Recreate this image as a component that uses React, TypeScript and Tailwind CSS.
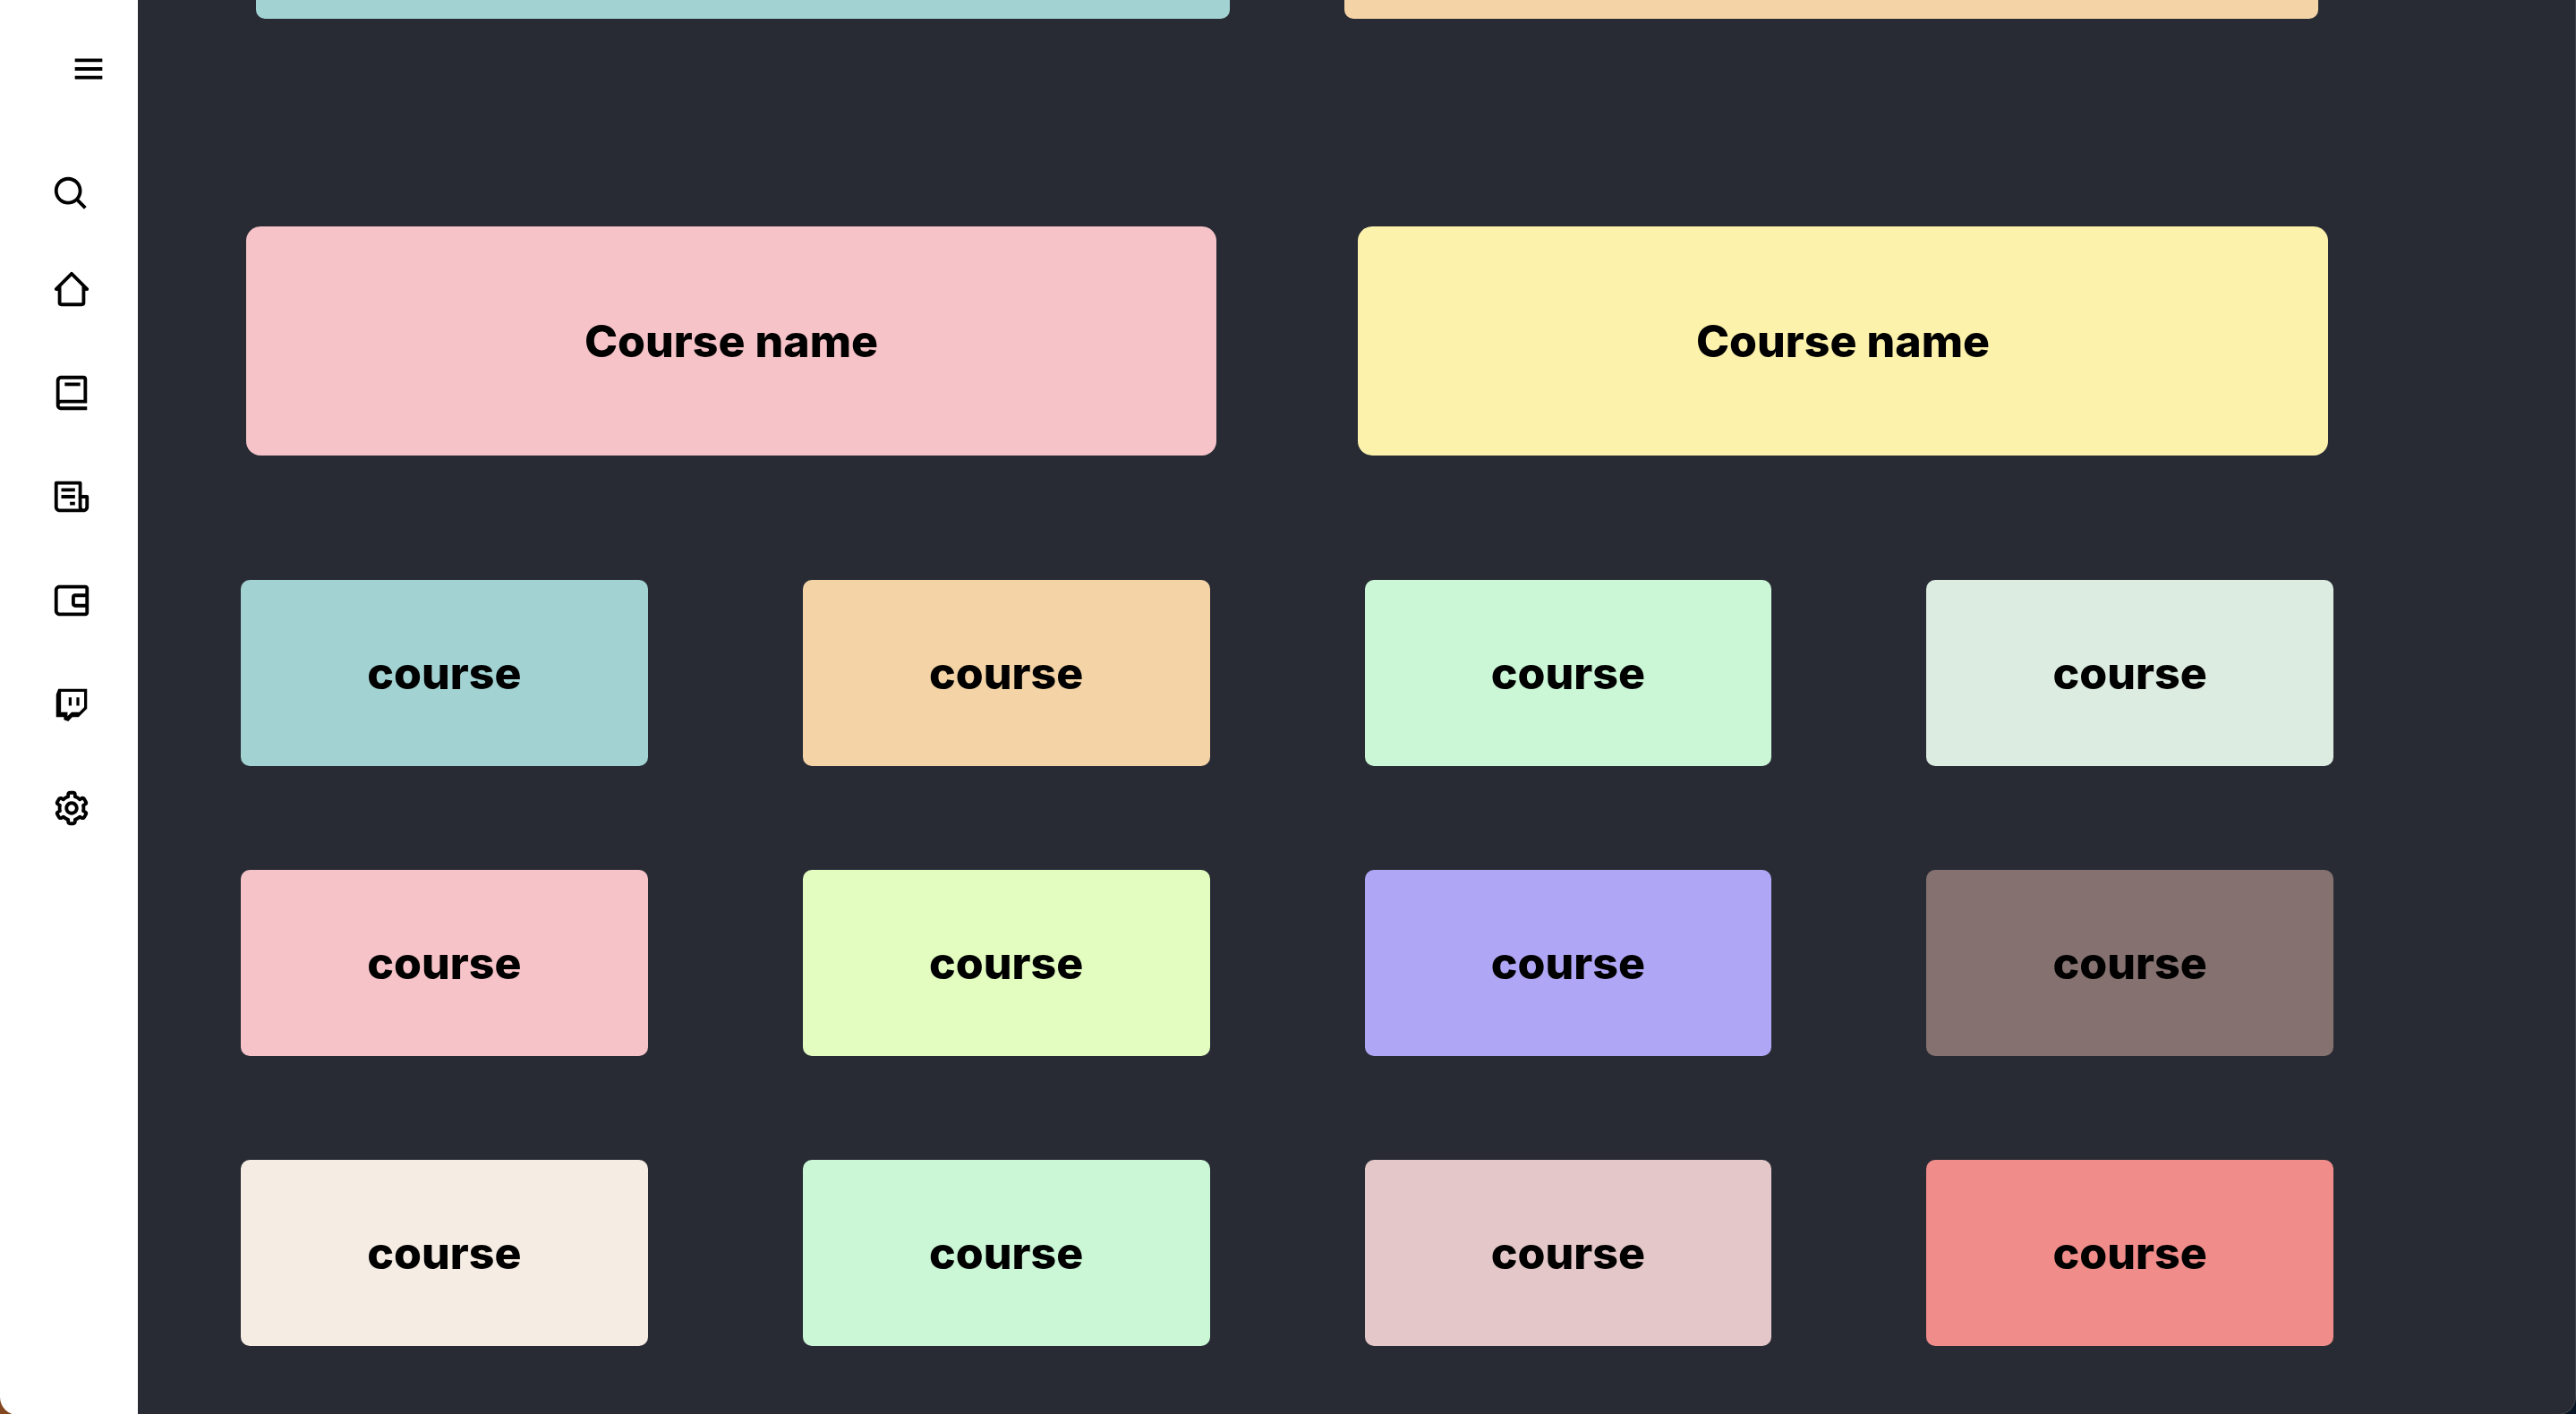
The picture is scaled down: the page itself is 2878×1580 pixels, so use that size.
import {
  BiBook,
  BiCog,
  BiHomeAlt2,
  BiLogoTwitch,
  BiMenu,
  BiSearch,
} from "react-icons/bi";

function NewsIcon({ size }: { size: number }) {
  return (
    <svg width={size} height={size} viewBox="0 0 24 24" fill="currentColor">
      <path d="M21 11h-3V4a1 1 0 0 0-1-1H3a1 1 0 0 0-1 1v14c0 1.654 1.346 3 3 3h14c1.654 0 3-1.346 3-3v-6a1 1 0 0 0-1-1zM5 19a1 1 0 0 1-1-1V5h12v13c0 .351.061.688.171 1H5zm15-1a1 1 0 0 1-2 0v-5h2v5z" />
      <path d="M6 7h8v2H6zm0 4h8v2H6zm5 4h3v2h-3z" />
    </svg>
  );
}

function WalletIcon({ size }: { size: number }) {
  return (
    <svg width={size} height={size} viewBox="0 0 24 24" fill="currentColor">
      <path d="M20 3H5C3.346 3 2 4.346 2 6v12c0 1.654 1.346 3 3 3h15c1.103 0 2-.897 2-2V5c0-1.103-.897-2-2-2zM5 19c-.552 0-1-.449-1-1V6c0-.551.448-1 1-1h15v3h-6c-1.103 0-2 .897-2 2v4c0 1.103.897 2 2 2h6.001v3H5zm15-9v4h-6v-4h6z" />
    </svg>
  );
}

const links = [
  { label: "Home", Icon: BiHomeAlt2 },
  { label: "Courses", Icon: BiBook },
  { label: "News", Icon: NewsIcon },
  { label: "Wallet", Icon: WalletIcon },
  { label: "Streams", Icon: BiLogoTwitch },
  { label: "Settings", Icon: BiCog },
];

const featured = ["bg-[#f6c3c8]", "bg-[#fdf2ab]"];

const courses = [
  "bg-[#a2d2d2]",
  "bg-[#f4d4a6]",
  "bg-[#cbf7d7]",
  "bg-[#ddece1]",
  "bg-[#f6c3c8]",
  "bg-[#e3fdc1]",
  "bg-[#afa7f5]",
  "bg-[#847170]",
  "bg-[#f5ece3]",
  "bg-[#cbf7d7]",
  "bg-[#e4c7c8]",
  "bg-[#f08c89]",
];

function Sidebar() {
  return (
    <aside className="w-[154px] shrink-0 rounded-bl-[20px] bg-white text-black">
      <div className="flex pt-[54px] pl-[76px]">
        <button type="button" aria-label="Toggle menu">
          <BiMenu size={46} />
        </button>
      </div>
      <div className="flex pt-[94px] pl-[57px]">
        <button type="button" aria-label="Search">
          <BiSearch size={46} />
        </button>
      </div>
      <nav className="flex flex-col gap-[70px] pt-[60px] pl-[57px]">
        {links.map(({ label, Icon }) => (
          <a key={label} href="#" aria-label={label} className="w-[46px]">
            <Icon size={46} />
          </a>
        ))}
      </nav>
    </aside>
  );
}

export default function App() {
  return (
    <div className="flex min-h-screen bg-linear-to-r from-[#84471f] to-[#061424] font-['Inter',sans-serif]">
      <Sidebar />
      <main className="flex-1 rounded-br-[20px] border-r border-b border-[#45444d] bg-[#282b34] pr-[270px] pl-[115px] pb-[76px]">
        <section className="mx-[17px] grid grid-cols-2 gap-32">
          <div className="h-[21px] rounded-b-[10px] bg-[#a2d2d2]" />
          <div className="h-[21px] rounded-b-[10px] bg-[#f4d4a6]" />
        </section>
        <section className="mx-[6px] mt-[232px] grid grid-cols-2 gap-[158px]">
          {featured.map((color) => (
            <article
              key={color}
              className={`flex h-64 items-center justify-center rounded-2xl ${color}`}
            >
              <h2 className="text-[50px] leading-none font-extrabold text-black">
                Course name
              </h2>
            </article>
          ))}
        </section>
        <section className="mt-[139px] grid grid-cols-4 gap-x-[173px] gap-y-[116px]">
          {courses.map((color, i) => (
            <article
              key={i}
              className={`flex h-52 items-center justify-center rounded-[10px] ${color}`}
            >
              <h3 className="text-[50px] leading-none font-extrabold text-black">
                course
              </h3>
            </article>
          ))}
        </section>
      </main>
    </div>
  );
}
